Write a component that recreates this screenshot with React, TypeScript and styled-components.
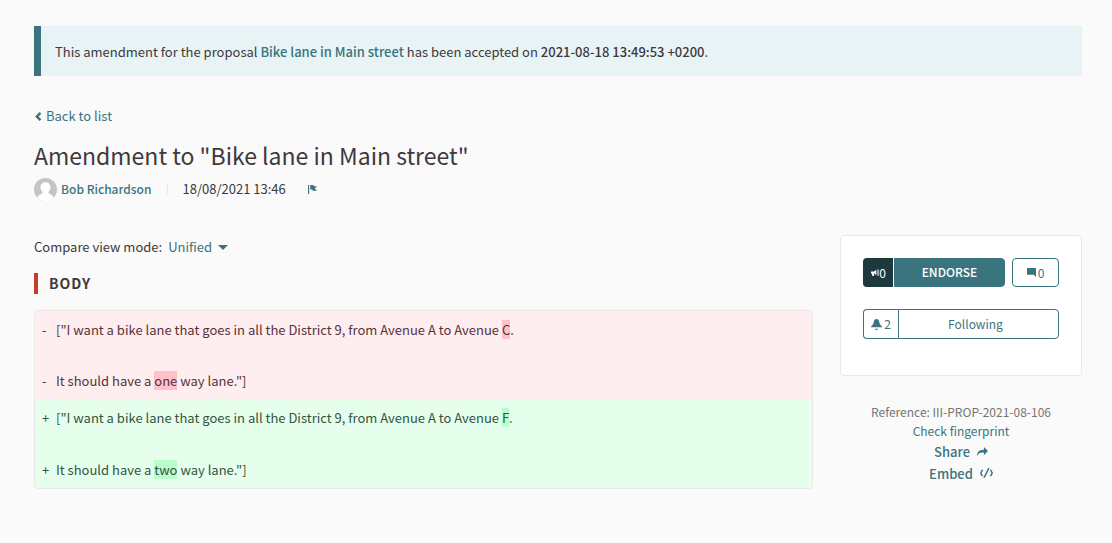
import React from "react";
import styled, { createGlobalStyle } from "styled-components";

const teal = "#3a747e";
const ink = "#3d393c";

const GlobalStyle = createGlobalStyle`
  *, *::before, *::after { box-sizing: border-box; }
  body {
    margin: 0;
    background: #fafafa;
    color: ${ink};
    font-family: "Noto Sans CJK SC", "Noto Sans", sans-serif;
    font-size: 13px;
    line-height: 20px;
  }
  h1, h2, p { margin: 0; }
  strong { font-weight: 500; }
  button, select { font: inherit; }
`;

const Page = styled.div`
  padding: 26px 30px 40px 34px;
`;

const Callout = styled.div`
  padding: 16px 14px 14px;
  background: #e8f3f5;
  border-left: 7px solid ${teal};
`;

const Link = styled.a<{ $strong?: boolean }>`
  color: ${teal};
  text-decoration: none;
  font-weight: ${(p) => (p.$strong ? 500 : 400)};
`;

const BackLink = styled(Link)`
  display: inline-flex;
  align-items: center;
  gap: 3px;
  margin-top: 30px;
`;

const Title = styled.h1`
  margin-top: 11px;
  font-size: 23px;
  font-weight: 400;
  line-height: 36px;
`;

const Meta = styled.div`
  display: flex;
  align-items: center;
  height: 24px;
  margin-top: 4px;
`;

const Author = styled(Link)`
  display: flex;
  align-items: center;
  gap: 4px;
  font-size: 12px;
`;

const Posted = styled.span`
  margin-left: 16px;
  padding-left: 14px;
  border-left: 1px solid #e8e8e8;
  line-height: 10px;
`;

const IconButton = styled.button`
  display: flex;
  margin-left: 22px;
  padding: 0;
  border: 0;
  background: none;
  color: ${teal};
`;

const Columns = styled.div`
  display: grid;
  grid-template-columns: minmax(0, 1fr) 242px;
  gap: 27px;
  align-items: start;
  margin-top: 34px;
`;

const ModePicker = styled.div`
  display: flex;
  align-items: center;
  height: 24px;
`;

const ModeSelect = styled.select`
  appearance: none;
  margin-left: 6px;
  padding: 0;
  border: 0;
  background: none;
  color: ${teal};
`;

const Caret = styled.svg`
  display: block;
  margin-left: 6px;
`;

const SectionHeading = styled.h2`
  margin-top: 14px;
  padding-left: 11px;
  border-left: 4px solid #cb3b29;
  font-size: 14px;
  font-weight: 700;
  line-height: 21px;
  letter-spacing: 1px;
`;

const Diff = styled.div`
  margin-top: 16px;
  overflow: hidden;
  border: 1px solid #e8e8e8;
  border-radius: 4px;
`;

const tones = {
  del: { back: "#ffeef0", mark: "#ffc0c8", text: "#553339" },
  ins: { back: "#e6ffed", mark: "#b8fdca", text: "#335540" },
};
type Tone = keyof typeof tones;

const DiffBlock = styled.div<{ $tone: Tone }>`
  display: grid;
  gap: ${(p) => (p.$tone === "ins" ? 32 : 31)}px;
  padding: 9px 7px 8px;
  background: ${(p) => tones[p.$tone].back};
  color: ${(p) => tones[p.$tone].text};
`;

const DiffLine = styled.p`
  display: grid;
  grid-template-columns: 14px 1fr;
`;

const Mark = styled.strong<{ $tone: Tone }>`
  display: inline-block;
  background: ${(p) => tones[p.$tone].mark};
  font-weight: 400;
  line-height: 19px;
`;

const Card = styled.div`
  display: grid;
  gap: 22px;
  padding: 22px 22px 36px;
  background: #fff;
  border: 1px solid #e8e8e8;
  border-radius: 4px;
`;

const CardRow = styled.div`
  display: flex;
  gap: 7px;
`;

const Split = styled.div`
  display: flex;
  flex: 1;
`;

const Button = styled.button<{ $solid?: boolean }>`
  display: flex;
  flex: 1;
  align-items: center;
  justify-content: center;
  height: ${(p) => (p.$solid ? 29 : 30)}px;
  padding: ${(p) => (p.$solid ? "0 0 2px" : "0 6px 0 0")};
  border: 1px solid ${teal};
  border-radius: 0 4px 4px 0;
  background: ${(p) => (p.$solid ? teal : "#fff")};
  color: ${(p) => (p.$solid ? "#fff" : teal)};
  font-size: 12px;
  font-weight: ${(p) => (p.$solid ? 500 : 400)};
`;

const Count = styled.span<{ $dark?: boolean }>`
  display: flex;
  align-items: center;
  justify-content: center;
  gap: ${(p) => (p.$dark ? 0 : 2)}px;
  width: ${(p) => (p.$dark ? 30 : 35)}px;
  margin-right: ${(p) => (p.$dark ? 1 : 0)}px;
  border: 1px solid ${(p) => (p.$dark ? "#1d393e" : teal)};
  border-right-width: 0;
  border-radius: 4px 0 0 4px;
  background: ${(p) => (p.$dark ? "#1d393e" : "#fff")};
  color: ${(p) => (p.$dark ? "#fff" : teal)};
  font-size: 12px;
  line-height: 18px;
`;

const CommentLink = styled(Link)`
  display: flex;
  align-items: center;
  justify-content: center;
  gap: 2px;
  width: 47px;
  border: 1px solid ${teal};
  border-radius: 4px;
  font-size: 12px;
`;

const Extras = styled.div`
  display: flex;
  flex-direction: column;
  align-items: center;
  margin-top: 26px;
  font-size: 12px;
  line-height: 19px;
`;

const Reference = styled.span`
  color: #757575;
`;

const ExtraButton = styled.button`
  display: flex;
  align-items: center;
  gap: 7px;
  padding: 0;
  border: 0;
  background: none;
  color: ${teal};
  font-size: 13px;
  font-weight: 500;
  line-height: 22px;

  &:first-of-type { margin-top: 1px; }
`;

const icons = {
  back: "M5 0l-4 4 4 4 1.5-1.5-2.5-2.5 2.5-2.5-1.5-1.5z",
  flag: "M0 0v8h1v-8h-1zm2 0v4h2v1h4l-2-1.97 2-2.03h-3v-1h-3z",
  bullhorn: "M5.300.8l-2.300 1.600h-3v2h.8l.7 2.600h1.800l-.7-2.600h.4l2.300 1.600zM6.500.6h1.100v6.200h-1.100z",
  comment: "M.09 0c-.06 0-.09.04-.09.09v5.810c0 .05.04.09.09.09h5.910l2 2v-7.910c0-.06-.04-.09-.09-.09h-7.810z",
  bell: "M4 0c-1.100 0-2 .9-2 2 0 1.040-.52 1.980-1.340 2.660-.41.34-.66.82-.66 1.340h8c0-.52-.24-1-.66-1.340-.82-.68-1.340-1.620-1.340-2.660 0-1.100-.89-2-2-2zm-1 7c0 .55.45 1 1 1s1-.45 1-1h-2z",
  share: "M5 0v2c-4 0-5 2.050-5 5 .52-1.980 2-3 4-3h1v2l3-3.160-3-2.840z",
  code: "M5 0l-3 6h1l3-6h-1zm-4 1l-1 2 1 2h1l-1-2 1-2h-1zm5 0l1 2-1 2h1l1-2-1-2h-1z",
};

function Icon({ name, size }: { name: keyof typeof icons; size: number }) {
  return (
    <svg width={size} height={size} viewBox="0 0 8 8" fill="currentColor" aria-hidden="true">
      <path d={icons[name]} />
    </svg>
  );
}

function Avatar() {
  return (
    <svg width="23" height="23" viewBox="0 0 23 23" aria-hidden="true">
      <clipPath id="avatar-round">
        <circle cx="11.500" cy="11.500" r="11.500" />
      </clipPath>
      <g clipPath="url(#avatar-round)">
        <rect width="23" height="23" fill="#c4c4c4" />
        <path
          fill="#fff"
          d="M11.500 4.200c3 0 5 2.200 5 5 0 2-.9 3.800-2.300 4.800.2 1.300 1.300 1.800 2.800 2.400 1.700.7 2.800 2 3 6.600h-17c.2-4.600 1.300-5.900 3-6.600 1.500-.6 2.600-1.100 2.800-2.400-1.400-1-2.300-2.800-2.300-4.800 0-2.800 2-5 5-5z"
        />
      </g>
    </svg>
  );
}

interface Change {
  tone: Tone;
  sign: string;
  letter: string;
  word: string;
}

const changes: Change[] = [
  { tone: "del", sign: "-", letter: "C", word: "one" },
  { tone: "ins", sign: "+", letter: "F", word: "two" },
];

export default function App() {
  return (
    <>
      <GlobalStyle />
      <Page>
        <Callout>
          This amendment for the proposal{" "}
          <Link href="#proposal" $strong>Bike lane in Main street</Link> has been accepted on{" "}
          <strong>2021-08-18 13:49:53 +0200</strong>.
        </Callout>
        <BackLink href="#list">
          <Icon name="back" size={9} />
          Back to list
        </BackLink>
        <Title>Amendment to "Bike lane in Main street"</Title>
        <Meta>
          <Author href="#author" $strong>
            <Avatar />
            Bob Richardson
          </Author>
          <Posted>18/08/2021 13:46</Posted>
          <IconButton type="button" aria-label="Report">
            <Icon name="flag" size={9} />
          </IconButton>
        </Meta>
        <Columns>
          <main>
            <ModePicker>
              <label htmlFor="view-mode">Compare view mode:</label>
              <ModeSelect id="view-mode">
                <option>Unified</option>
              </ModeSelect>
              <Caret width="10" height="5" viewBox="0 0 10 5" aria-hidden="true">
                <path d="M0 0h10l-5 5z" fill={teal} />
              </Caret>
            </ModePicker>
            <SectionHeading>BODY</SectionHeading>
            <Diff>
              {changes.map(({ tone, sign, letter, word }) => (
                <DiffBlock key={tone} $tone={tone}>
                  <DiffLine>
                    <span>{sign}</span>
                    <span>
                      ["I want a bike lane that goes in all the District 9, from Avenue A to Avenue{" "}
                      <Mark $tone={tone}>{letter}</Mark>.
                    </span>
                  </DiffLine>
                  <DiffLine>
                    <span>{sign}</span>
                    <span>
                      It should have a <Mark $tone={tone}>{word}</Mark> way lane."]
                    </span>
                  </DiffLine>
                </DiffBlock>
              ))}
            </Diff>
          </main>
          <aside>
            <Card>
              <CardRow>
                <Split>
                  <Count $dark>
                    <Icon name="bullhorn" size={8} />0
                  </Count>
                  <Button type="button" $solid>ENDORSE</Button>
                </Split>
                <CommentLink href="#comments" aria-label="Comments">
                  <Icon name="comment" size={9} />0
                </CommentLink>
              </CardRow>
              <Split>
                <Count>
                  <Icon name="bell" size={11} />2
                </Count>
                <Button type="button">Following</Button>
              </Split>
            </Card>
            <Extras>
              <Reference>Reference: III-PROP-2021-08-106</Reference>
              <Link href="#fingerprint">Check fingerprint</Link>
              <ExtraButton type="button">
                Share <Icon name="share" size={11} />
              </ExtraButton>
              <ExtraButton type="button">
                Embed <Icon name="code" size={13} />
              </ExtraButton>
            </Extras>
          </aside>
        </Columns>
      </Page>
    </>
  );
}
